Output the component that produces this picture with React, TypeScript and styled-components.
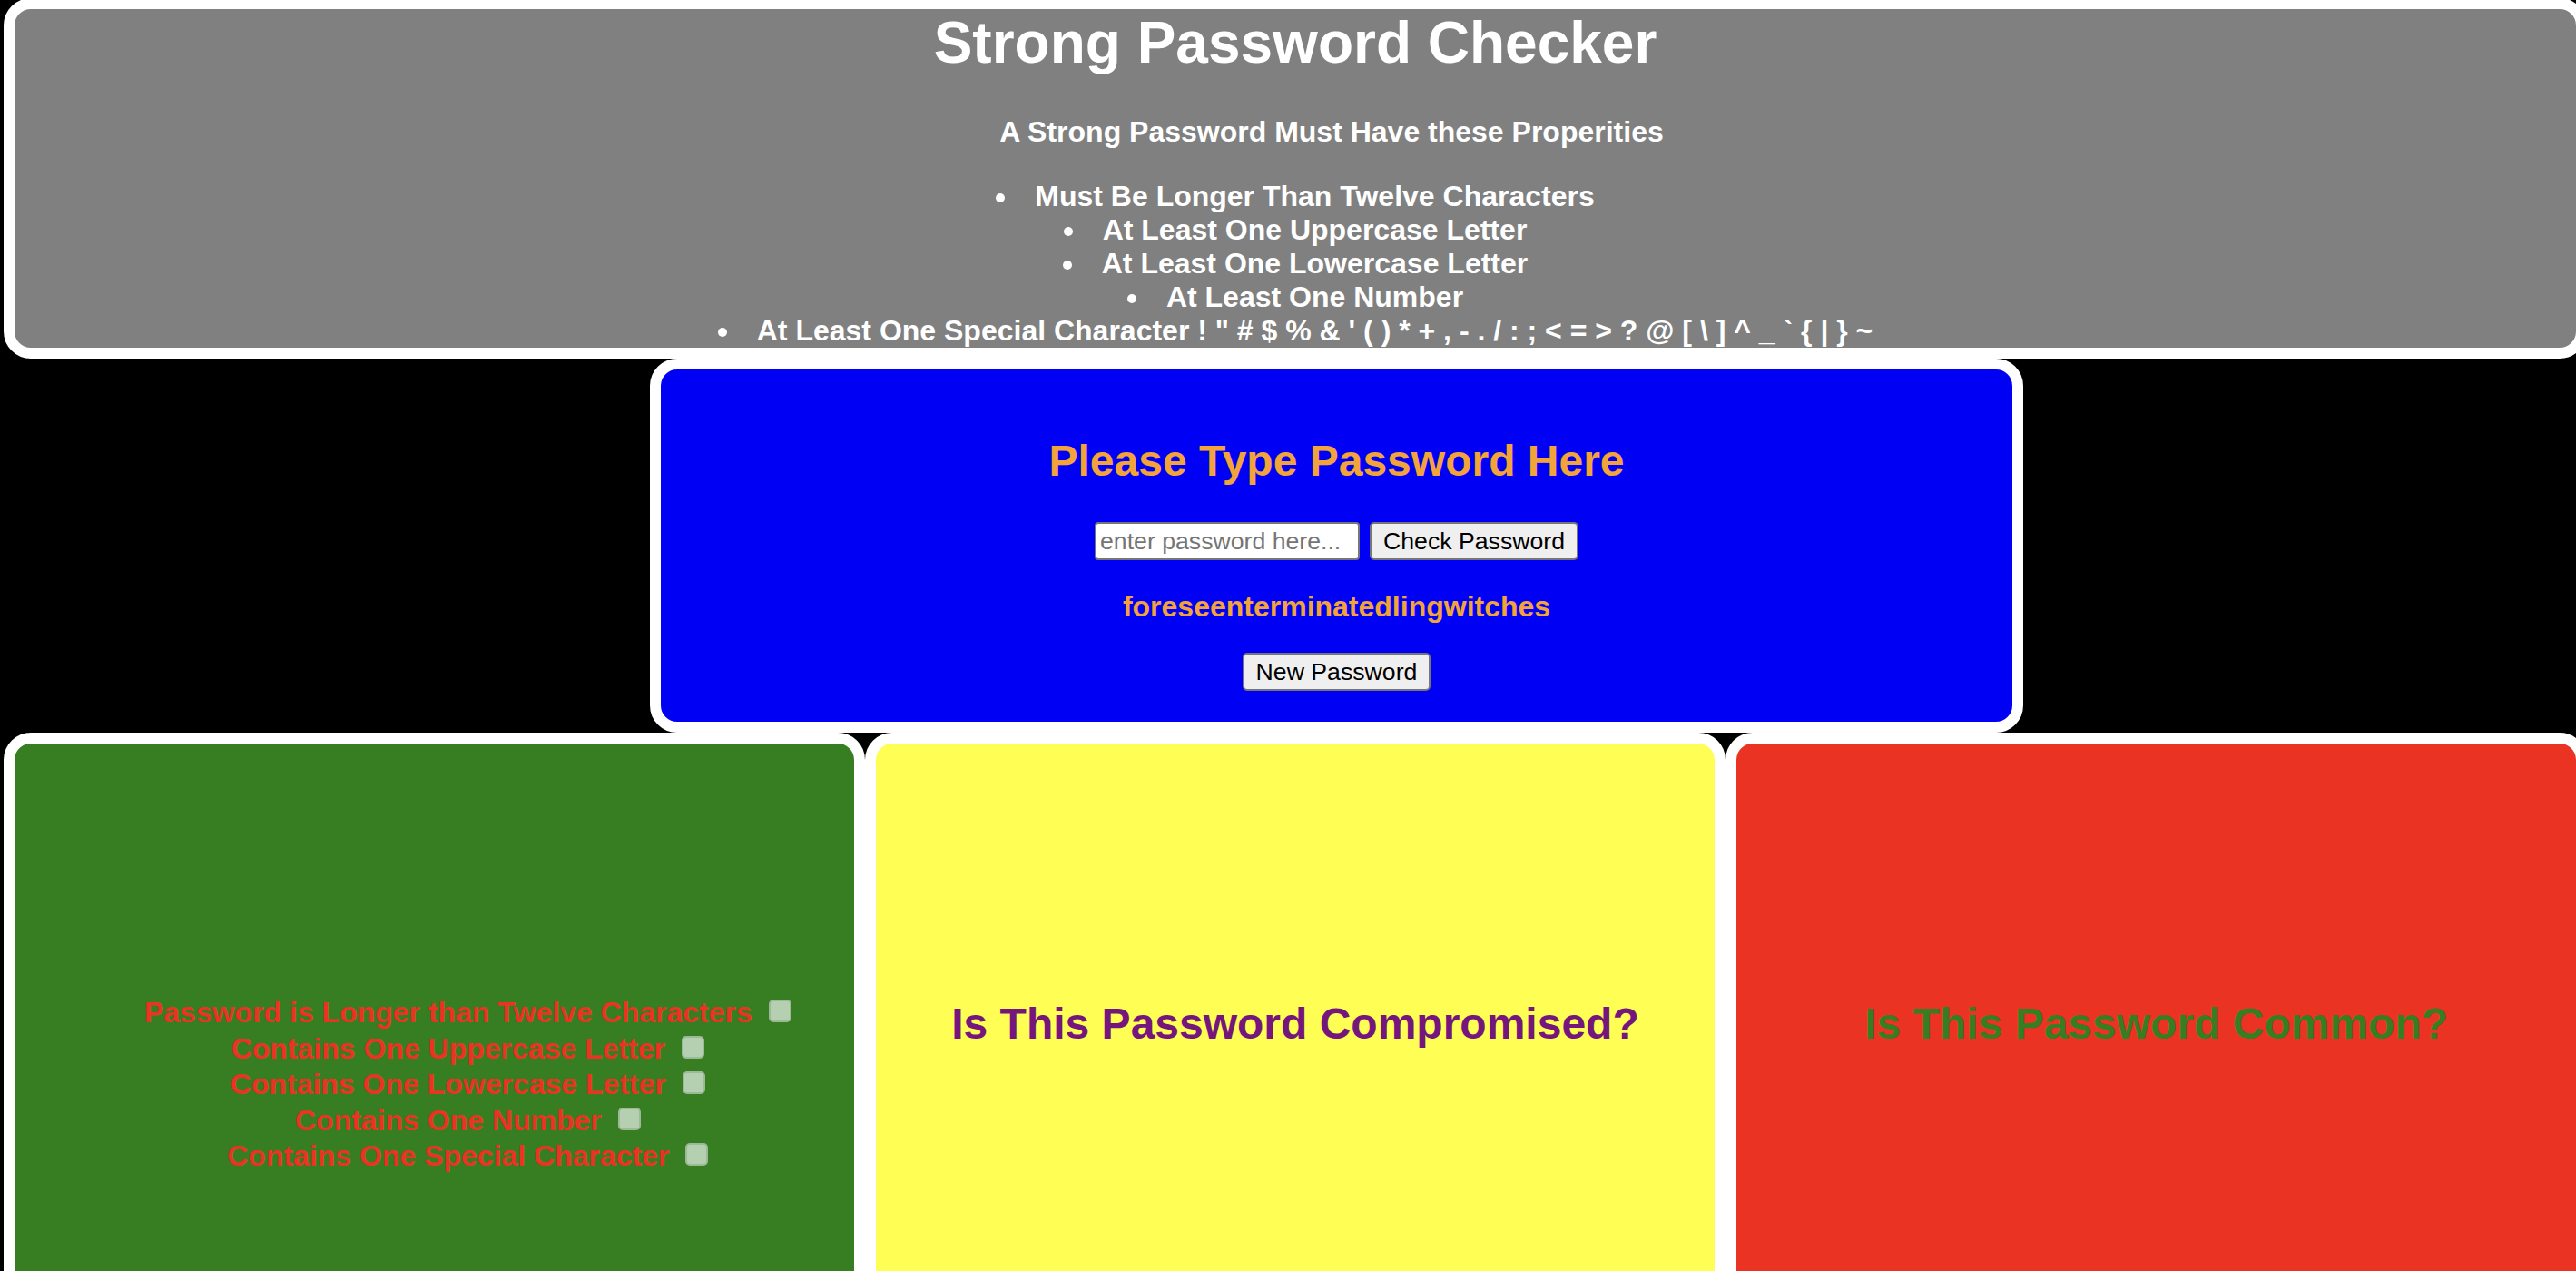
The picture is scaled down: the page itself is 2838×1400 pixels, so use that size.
import styled, { createGlobalStyle } from 'styled-components';

const rules = [
  'Must Be Longer Than Twelve Characters',
  'At Least One Uppercase Letter',
  'At Least One Lowercase Letter',
  'At Least One Number',
  'At Least One Special Character ! " # $ % & \' ( ) * + , - . / : ; < = > ? @ [ \\ ] ^ _ ` { | } ~',
];

const checks = [
  'Password is Longer than Twelve Characters',
  'Contains One Uppercase Letter',
  'Contains One Lowercase Letter',
  'Contains One Number',
  'Contains One Special Character',
];

const App = () => {
  return (
    <>
      <GlobalStyle />
      <Page>
        <Header>
          <Title>Strong Password Checker</Title>
          <Subtitle>A Strong Password Must Have these Properities</Subtitle>
          <RuleList>
            {rules.map((rule) => (
              <li key={rule}>{rule}</li>
            ))}
          </RuleList>
        </Header>

        <PasswordPanel>
          <PanelHeading>Please Type Password Here</PanelHeading>
          <InputRow>
            <PasswordInput type="text" placeholder="enter password here..." />
            <Button type="button">Check Password</Button>
          </InputRow>
          <GeneratedPassword>foreseenterminatedlingwitches</GeneratedPassword>
          <Button type="button">New Password</Button>
        </PasswordPanel>

        <CardRow>
          <Card $bg="#377d22">
            <CheckList>
              {checks.map((check) => (
                <li key={check}>
                  {check} <CheckBox type="checkbox" disabled />
                </li>
              ))}
            </CheckList>
          </Card>
          <Card $bg="#fffe55">
            <CardHeading $color="#75167c">Is This Password Compromised?</CardHeading>
          </Card>
          <Card $bg="#ea3323">
            <CardHeading $color="#377d22">Is This Password Common?</CardHeading>
          </Card>
        </CardRow>
      </Page>
    </>
  );
};

export default App;

// ############### 디자인 ###############

const GlobalStyle = createGlobalStyle`
  html,
  body {
    margin: 0;
    background: #000;
    overflow: hidden;
  }
  body {
    font-family: 'Liberation Sans', Arial, sans-serif;
  }
  * {
    box-sizing: border-box;
  }
`;

const Page = styled.div`
  width: 2846px;
  margin: -2px 0 0 4px;
`;

const Header = styled.header`
  border: 12px solid white;
  border-radius: 30px;
  background-color: #808080;
  color: white;
  text-align: center;
`;

const Title = styled.h1`
  margin: 0 0 43px;
  font-size: 64px;
  font-weight: 700;
  line-height: normal;
`;

const Subtitle = styled.p`
  margin: 0 0 34px;
  padding-left: 80px;
  font-size: 32px;
  font-weight: 700;
`;

const RuleList = styled.ul`
  margin: 0;
  padding: 0;
  list-style: disc inside;
  font-size: 32px;
  font-weight: 700;
  line-height: normal;
`;

const PasswordPanel = styled.section`
  width: 1513px;
  margin-left: 712px;
  padding: 33px 0 34px;
  border: 12px solid white;
  border-radius: 30px;
  background-color: #0000f5;
  display: flex;
  flex-direction: column;
  align-items: center;
`;

const PanelHeading = styled.h2`
  margin: 40px 0;
  font-size: 48px;
  font-weight: 700;
  line-height: normal;
  color: #f2a43a;
`;

const InputRow = styled.div`
  display: flex;
  gap: 11px;
`;

const PasswordInput = styled.input`
  width: 292px;
  height: 42px;
  padding: 0 4px;
  border: 2px solid #767676;
  border-radius: 4px;
  background: white;
  font-family: 'Liberation Sans', Arial, sans-serif;
  font-size: 26.67px;
  color: black;
  &::placeholder {
    color: #757575;
  }
`;

const Button = styled.button`
  height: 42px;
  padding: 0 13px;
  border: 2px solid #767676;
  border-radius: 5px;
  background-color: #efefef;
  font-family: 'Liberation Sans', Arial, sans-serif;
  font-size: 26.67px;
  color: black;
`;

const GeneratedPassword = styled.p`
  margin: 33px 0 32px;
  font-size: 32px;
  font-weight: 700;
  line-height: normal;
  color: #f2a43a;
`;

const CardRow = styled.div`
  display: flex;
`;

const Card = styled.section<{ $bg: string }>`
  flex: 0 0 948.67px;
  height: 760px;
  padding-top: 240px;
  border: 12px solid white;
  border-radius: 30px;
  background-color: ${(props) => props.$bg};
  text-align: center;
`;

const CheckList = styled.ul`
  margin: 37px 0 0;
  padding-left: 80px;
  list-style: none;
  font-size: 32px;
  font-weight: 700;
  line-height: 39.5px;
  color: #ea3323;
`;

const CheckBox = styled.input`
  appearance: none;
  width: 25px;
  height: 25px;
  margin: 0 6px 0 9px;
  vertical-align: baseline;
  border: 2px solid #9db998;
  border-radius: 5px;
  background-color: #b5d0b0;
`;

const CardHeading = styled.h2<{ $color: string }>`
  margin: 41px 0 0;
  font-size: 48px;
  font-weight: 700;
  line-height: normal;
  color: ${(props) => props.$color};
`;
